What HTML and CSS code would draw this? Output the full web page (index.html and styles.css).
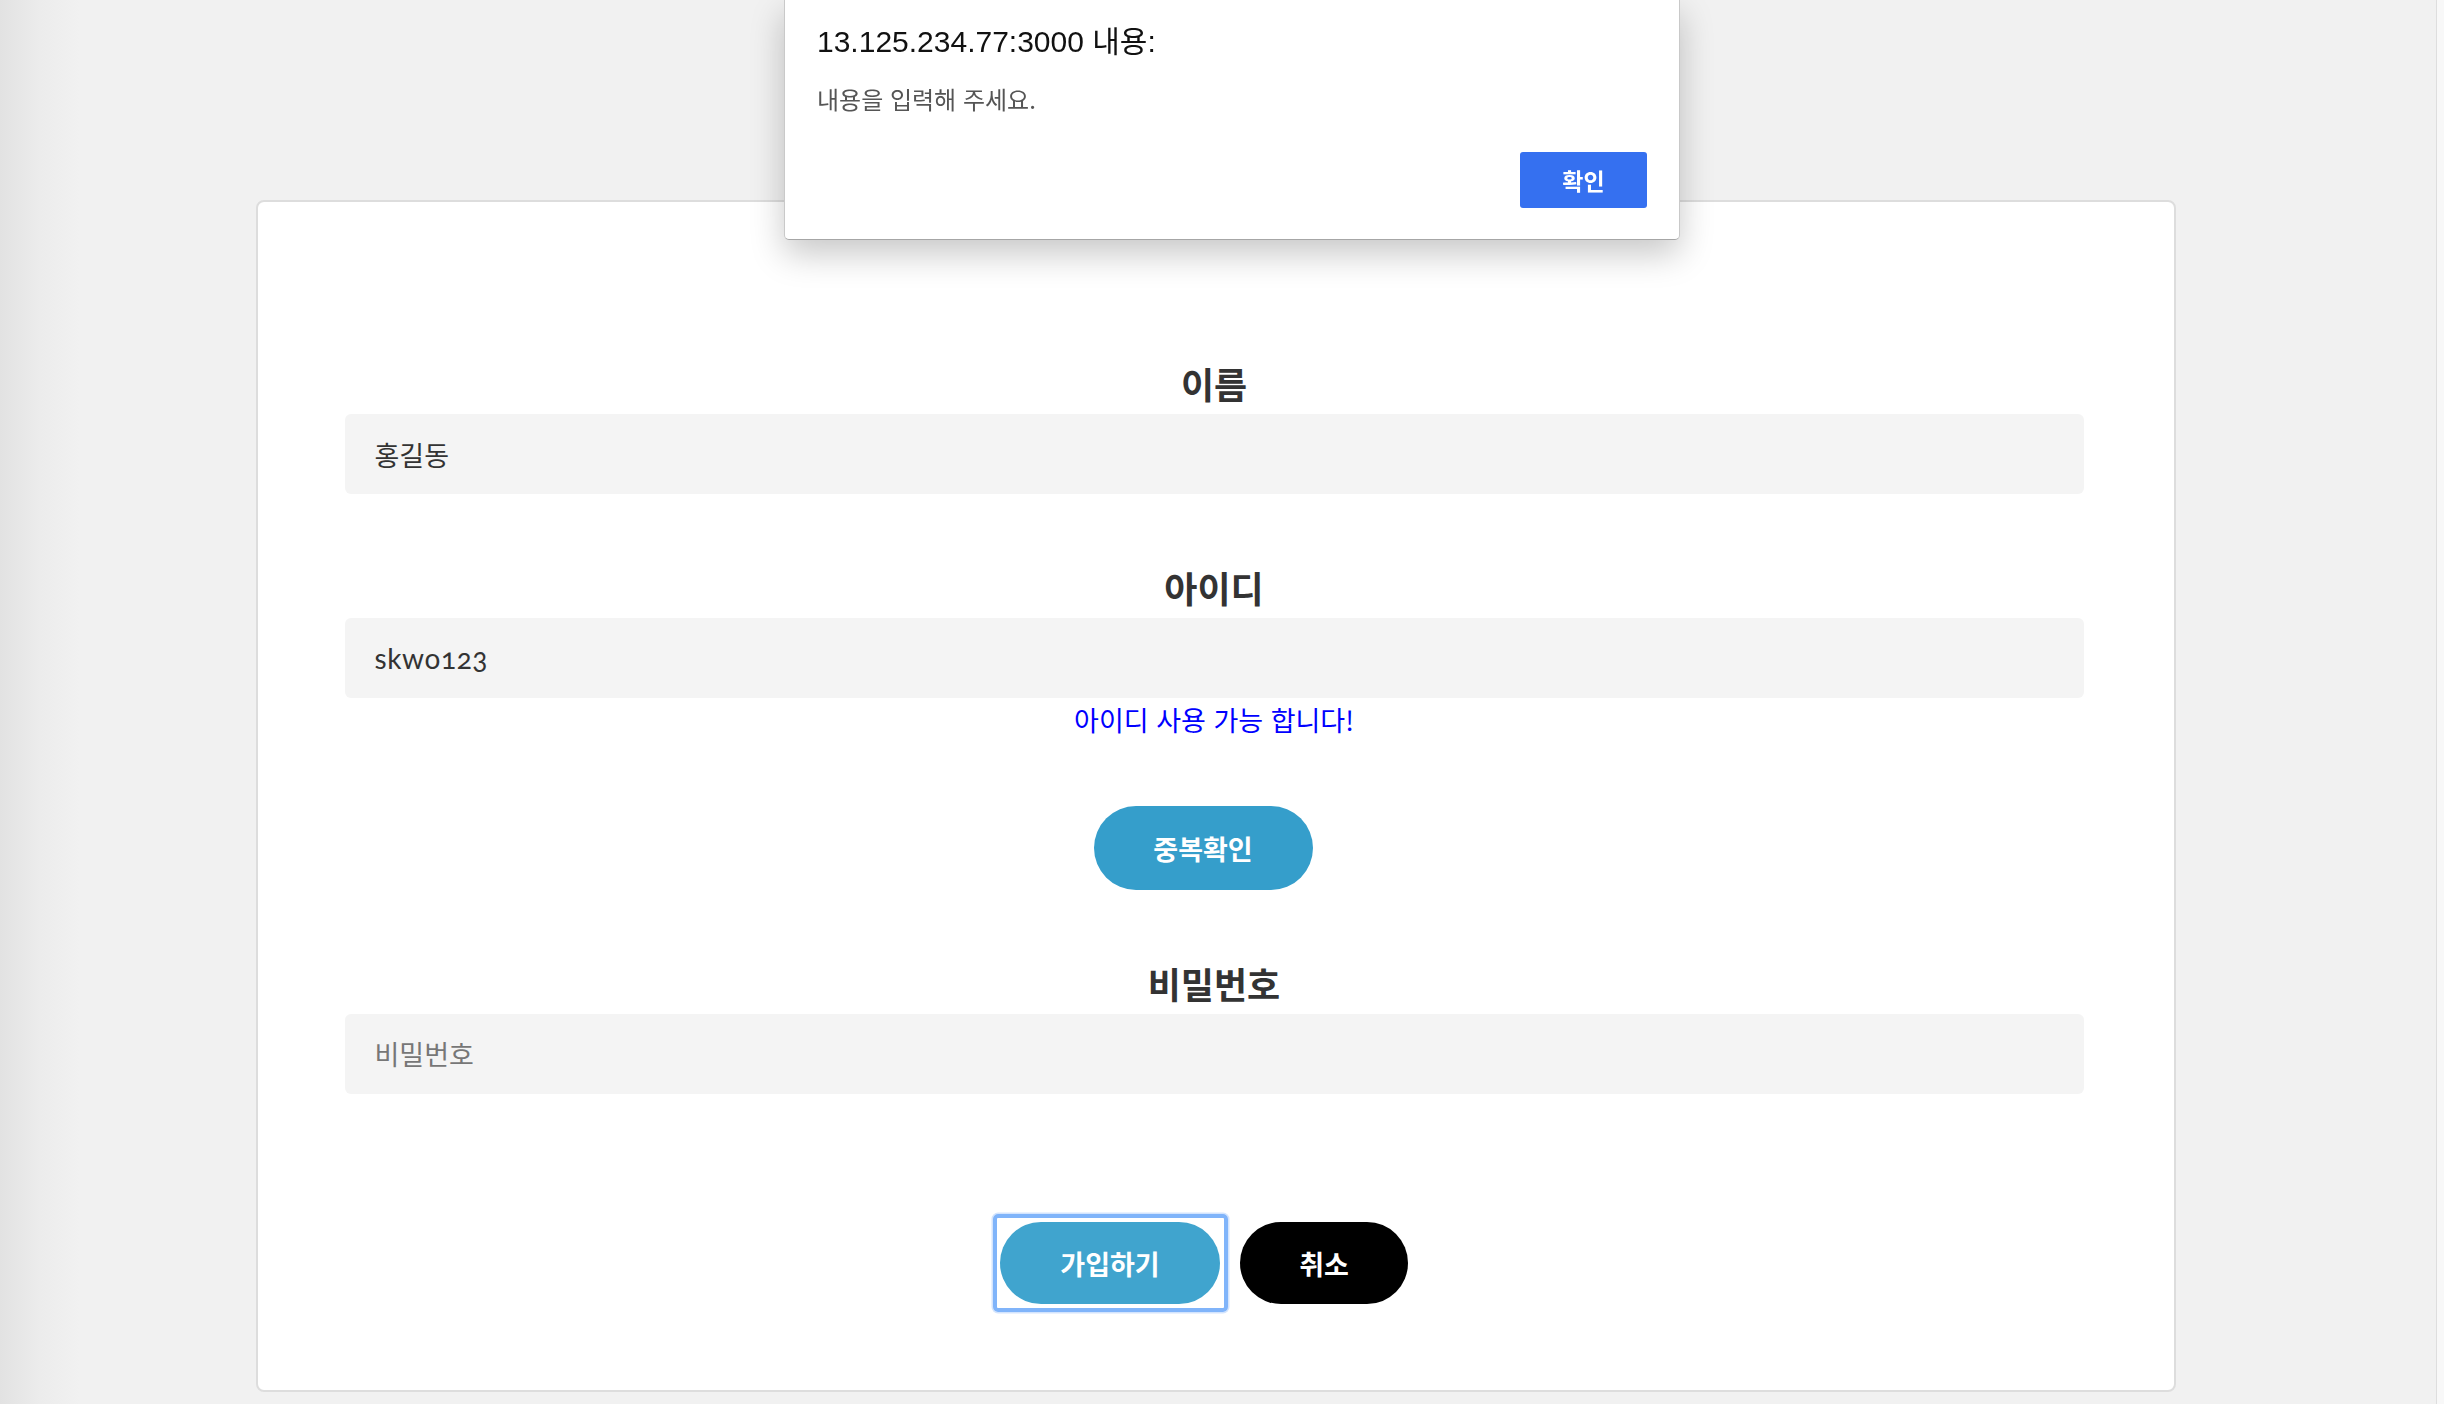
FILE: index.html
```html
<!DOCTYPE html>
<html lang="ko">
<head>
<meta charset="utf-8">
<title>회원가입</title>
<link rel="stylesheet" href="styles.css">
</head>
<body>
<div class="page">
  <main class="main">
    <form class="card">
      <div class="field">
        <label class="label">이름</label>
        <input class="input" type="text" value="홍길동">
      </div>
      <div class="field">
        <label class="label">아이디</label>
        <input class="input input-latin" type="text" value="skwo123">
        <p class="msg">아이디 사용 가능 합니다!</p>
        <div class="btn-row">
          <button type="button" class="btn btn-check">중복확인</button>
        </div>
      </div>
      <div class="field">
        <label class="label">비밀번호</label>
        <input class="input" type="password" placeholder="비밀번호">
      </div>
      <div class="actions">
        <button type="button" class="btn btn-join focused">가입하기</button>
        <button type="button" class="btn btn-cancel">취소</button>
      </div>
    </form>
  </main>
  <div class="scroll-strip"></div>
</div>

<div class="dialog">
  <div class="dialog-title">13.125.234.77:3000 내용:</div>
  <div class="dialog-msg">내용을 입력해 주세요.</div>
  <div class="dialog-actions">
    <button type="button" class="dialog-ok">확인</button>
  </div>
</div>
</body>
</html>
```

FILE: styles.css
```css
* { box-sizing: border-box; }

html, body {
  margin: 0;
  padding: 0;
  height: 100%;
}

body {
  font-family: "Lato", "Noto Sans CJK KR", sans-serif;
  background: linear-gradient(to right, #e2e2e2 0, #ececec 40px, #f1f1f1 80px, #f1f1f1 100%);
  overflow: hidden;
}

.page {
  display: flex;
  height: 1404px;
}

.main {
  flex: 1;
  padding-top: 200px;
  display: flex;
  justify-content: center;
}

.scroll-strip {
  width: 8px;
  border-left: 1px solid #dedede;
  background: #f8f8f8;
}

.card {
  width: 1920px;
  height: 1192px;
  margin-left: -5px;
  background: #fff;
  border: 2px solid #dddddd;
  border-radius: 8px;
  padding: 159px 90px 0 87px;
  display: flex;
  flex-direction: column;
}

.field {
  display: flex;
  flex-direction: column;
  align-items: stretch;
  margin-bottom: 71px;
}

.label {
  display: block;
  text-align: center;
  font-family: "Noto Sans CJK KR", sans-serif;
  font-size: 36px;
  line-height: 44px;
  font-weight: 700;
  color: #333;
  margin-bottom: 9px;
}

.input {
  display: block;
  width: 100%;
  height: 80px;
  border: none;
  outline: none;
  border-radius: 6px;
  background: #f4f4f4;
  padding: 0 30px;
  font-family: "Lato", "Noto Sans CJK KR", sans-serif;
  font-size: 27px;
  color: #333;
  font-variant-numeric: oldstyle-nums;
  margin: 0;
}

.input-latin {
  font-size: 28px;
  letter-spacing: 0.6px;
}

.input::placeholder {
  color: #777;
}

.msg {
  margin: 6px 0 0;
  text-align: center;
  font-family: "Noto Sans CJK KR", sans-serif;
  font-size: 27px;
  line-height: 32px;
  color: #0000ff;
}

.btn-row {
  display: flex;
  justify-content: center;
  margin-top: 70px;
  padding-right: 22px;
}

.btn {
  border: none;
  border-radius: 42px;
  height: 84px;
  color: #fff;
  font-family: "Noto Sans CJK KR", sans-serif;
  font-size: 27px;
  font-weight: 700;
  padding: 0;
  cursor: pointer;
}

.btn-check {
  width: 219px;
  background: #359ecb;
}

.actions {
  display: flex;
  justify-content: center;
  gap: 20px;
  margin-top: 57px;
  padding-right: 20px;
}

.btn-join {
  width: 220px;
  height: 82px;
  background: #40a4ce;
  position: relative;
}

.btn-join.focused::after {
  content: "";
  position: absolute;
  left: -7px;
  right: -8px;
  top: -8px;
  bottom: -8px;
  border: 4px solid #80b4fa;
  border-radius: 5px;
  box-shadow: 0 0 0 1.5px #d3e4fd;
}

.btn-cancel {
  width: 168px;
  height: 82px;
  background: #000;
}

/* alert dialog overlay */
.dialog {
  position: fixed;
  top: 0;
  left: 784px;
  width: 896px;
  height: 240px;
  background: #fff;
  border: 1px solid #c9c9c9;
  border-top: none;
  border-bottom: 1px solid #a6a6a6;
  border-radius: 0 0 5px 5px;
  box-shadow: 0 14px 34px rgba(0, 0, 0, 0.22);
  padding: 24px 32px 0 32px;
}

.dialog-title {
  font-family: "Liberation Sans", "Noto Sans CJK KR", sans-serif;
  font-size: 30px;
  line-height: 36px;
  color: #111;
}

.dialog-msg {
  margin-top: 24px;
  font-family: "Noto Sans CJK KR", sans-serif;
  font-size: 24px;
  line-height: 30px;
  color: #555;
}

.dialog-actions {
  display: flex;
  justify-content: flex-end;
  margin-top: 38px;
}

.dialog-ok {
  width: 127px;
  height: 56px;
  border: none;
  border-radius: 3px;
  background: #3570f0;
  color: #fff;
  font-family: "Noto Sans CJK KR", sans-serif;
  font-size: 23px;
  font-weight: 700;
  padding: 0;
}
```
